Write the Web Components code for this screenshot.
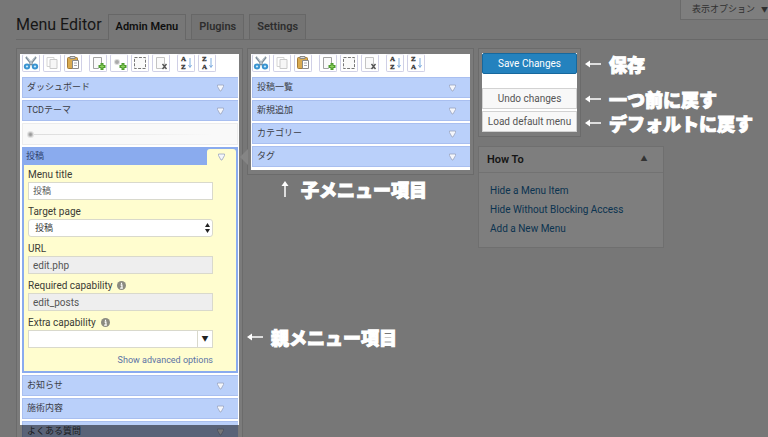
<!DOCTYPE html>
<html lang="ja">
<head>
<meta charset="utf-8">
<title>Menu Editor</title>
<style>
html,body{margin:0;height:100%;overflow:hidden}
body{background:#777;font-family:Roboto,"Noto Sans CJK JP",sans-serif;font-size:10px;line-height:15px;color:#333}
</style>
</head>
<body>
<menu-editor-page></menu-editor-page>
<script>
const define = (name, html) => customElements.define(name, class extends HTMLElement {
  constructor() {
    super();
    this.attachShadow({ mode: 'open' });
  }
  connectedCallback() {
    if (this.shadowRoot.childNodes.length) return;
    const t = document.createElement('template');
    t.innerHTML = '<style>*{box-sizing:border-box}a{text-decoration:none}button,input,select{font:inherit;color:inherit;margin:0;border-radius:0}</style>' + (typeof html === 'function' ? html(this) : html);
    this.shadowRoot.append(t.content.cloneNode(true));
  }
});

const page = `<path d="M3.500 2.500h8v8l-3 3h-5z" fill="#fafafa" stroke="#a3a3a3"/>`;
const plus = `<path d="M12 8v7M8.500 11.500h7" stroke="#4f9c30" stroke-width="3"/><path d="M12 9.500v4M10 11.500h4" stroke="#8ed05f"/>`;
const letters = (a, b) => `<g font-family="Liberation Serif, serif" font-weight="700" font-size="7" fill="#333" stroke="#333" stroke-width=".3"><text x="3" y="6">${a}</text><text x="3" y="14">${b}</text></g><path d="M12 3v9M10.500 10l1.500 2.500 1.500-2.500" fill="none" stroke="#7fade0"/>`;
const icons = {
  Cut: `<path d="M3 2l6.500 8M13 2L6.500 10" stroke="#7f8d99" stroke-width="2"/><path d="M4 2l5 7M12 2L7 9" stroke="#dce6ee" stroke-width=".7"/><g fill="#cdeafb" stroke="#3b94d1" stroke-width="2"><ellipse cx="4" cy="11.500" rx="2.200" ry="2"/><ellipse cx="12" cy="11.500" rx="2.200" ry="2"/></g>`,
  Copy: `<path d="M3 2.500h7v9H3z" fill="#fff" stroke="#d4d4d4"/><path d="M6 4.500h7v9H6z" fill="#f6f6f6" stroke="#cacaca"/>`,
  Paste: `<rect x="2.500" y="2.500" width="10" height="11" rx="1" fill="#d9aa50" stroke="#a37a38"/><path d="M5 1.500h5v2H5z" fill="#ddd" stroke="#888"/><path d="M7.500 5.500h6v8h-6z" fill="#fff" stroke="#8a8a8a"/><path d="M9 8h3M9 10.500h3" stroke="#aaa"/>`,
  'New menu': page + plus,
  'New separator': `<circle cx="6" cy="7" r="3" fill="#ddd"/><circle cx="6" cy="7" r="2" fill="#aaa"/>` + plus,
  Select: `<path d="M2.500 2.500h11v11h-11z" fill="#fafafa" stroke="#777" stroke-dasharray="3 1.400"/>`,
  Delete: `<path d="M3.500 2.500h8v11h-8z" fill="#fafafa" stroke="#c4c4c4"/><path d="M9.500 9l4 5M13.500 9l-4 5" stroke="#555" stroke-width="1.400"/>`,
  'Sort ascending': letters('A', 'Z'),
  'Sort descending': letters('Z', 'A')
};

define('icon-button', el => `<style>
:host{display:block}
button{display:block;width:18px;height:18px;padding:0;border:1px solid #d0d0e6;border-top-color:#f0f0f6;border-radius:2px;background:#fff}
svg{display:block;width:16px;height:16px}
</style><button aria-label="${el.getAttribute('name')}"><svg viewBox="0 0 16 16">${icons[el.getAttribute('name')]}</svg></button>`);

define('editor-toolbar', el => {
  const b = n => `<icon-button name="${n}"></icon-button>`;
  const mid = el.hasAttribute('separator') ? b('New separator') : '';
  return `<style>:host{display:flex;gap:7px;padding-bottom:5px}div{display:flex;gap:3px}</style>
<div>${b('Cut')}${b('Copy')}${b('Paste')}</div><div>${b('New menu')}${mid}${b('Select')}${b('Delete')}</div><div>${b('Sort ascending')}${b('Sort descending')}</div>`;
});

const tri = `<svg width="9" height="8" viewBox="0 0 9 8"><path d="M1.500 1h6v1.500L5 7H4L1.500 2.500z" fill="#f4f6fb" stroke="#9aa5bf" stroke-width=".8"/></svg>`;

define('menu-row', `<style>
:host{display:flex;align-items:center;height:21px;padding:0 12px 0 4px;border:1px solid #a9bff0;border-right:0;background:#bad0fa;color:#3a3d46;font-size:9px}
span{flex:1}
button{display:grid;place-items:center;border:0;background:none;padding:0;width:11px;height:15px}
</style><span><slot></slot></span><button aria-label="Expand">${tri}</button>`);

define('menu-separator', `<style>
:host{display:flex;align-items:center;height:22px;padding:0 4px;border:1px solid #ececec;background:#f9f9f9}
i{width:7px;height:7px;border-radius:50%;background:radial-gradient(#999 15%,#e2e2e2 60%)}
hr{flex:1;margin:0;border:0;height:1px;background:linear-gradient(90deg,#ddd,#f9f9f9 90%)}
</style><i></i><hr>`);

define('form-field', el => {
  const v = el.getAttribute('value') || '';
  const type = el.getAttribute('type');
  const ctl = type === 'select' ? `<select id="c"><option>${v}</option></select><svg width="5" height="10" viewBox="0 0 5 10"><path d="M0 4l2.500-4L5 4zM0 6l2.500 4L5 6z" fill="#222"/></svg>`
    : type === 'combo' ? `<input id="c" type="text" value="${v}"><button aria-label="Choose capability">▼</button>`
    : `<input id="c" type="text" value="${v}" ${el.hasAttribute('readonly') ? 'readonly' : ''}>`;
  const info = el.hasAttribute('info') ? `<svg width="9" height="9" viewBox="0 0 10 10"><circle cx="5" cy="5" r="5" fill="#8b8b80"/><path d="M5 2v1.500M4 4.500h1.500V8M3.500 8h3" stroke="#fff" stroke-width="1.300" fill="none"/></svg>` : '';
  return `<style>
:host{display:block;padding-bottom:4px}
.label{display:flex;align-items:center;gap:5px;height:15px;color:#3b3b35}
.box{display:flex;height:18px;position:relative}
input,select{flex:1;min-width:0;padding:0 4px;border:1px solid #d9d9cc;background:#fff;color:#555;appearance:none;font-size:9px}
input[readonly]{background:#eee;font-size:10px}
select{border-radius:3px;padding:0 6px;color:#333}
.box svg{position:absolute;right:3px;top:4px}
button{width:15px;border:1px solid #d9d9cc;border-left:0;background:#fff;padding:0;font-size:7px;line-height:1;color:#222}
</style><div class="label"><label for="c">${el.getAttribute('label')}</label>${info}</div><div class="box">${ctl}</div>`;
});

define('menu-item-open', `<style>
:host{display:block;border:2px solid #8aabee;background:#fffdcf}
header{display:flex;height:16px;background:#8aabee;color:#2c3e6b;padding-left:2px;font-size:9px;line-height:15px}
header span{flex:1}
button{width:29px;border:0;padding:0;background:#fffdcf;border-radius:3px 3px 0 0;display:grid;place-items:center}
section{padding:2px 23px 3px 4px}
a{display:block;text-align:right;color:#5b72a5;font-size:9px;padding-top:1px}
</style><header><span><slot name="title"></slot></span><button aria-label="Collapse">${tri}</button></header>
<section><slot></slot><a href="#">Show advanced options</a></section>`);

define('editor-column', el => `<style>
:host{display:block;position:relative;border:1px solid #6b6b6b;background:#7b7b7b;padding:5px 3px 4px}
.list{display:flex;flex-direction:column;gap:2px;background:#fff;padding:0 0 3px 1px}
:host([primary]) .list{padding:0 1px 0 2px}
.list editor-toolbar{margin-bottom:-2px}
.pointer{position:absolute;left:-8px;top:100px;width:8px;height:16px;background:#858585;clip-path:polygon(0 50%,100% 0,100% 100%)}
.fade{position:absolute;left:3px;right:3px;bottom:0;height:21px;background:rgba(0,0,0,.52)}
</style><div class="list"><editor-toolbar ${el.hasAttribute('primary') ? 'separator' : ''}></editor-toolbar><slot></slot></div>${el.hasAttribute('primary') ? '<div class="fade"></div>' : '<div class="pointer"></div>'}`);

define('callout-note', `<style>
:host{display:flex;align-items:center;gap:8px;color:#fff;font:900 18px/24px "Noto Sans CJK JP",sans-serif;white-space:nowrap}
b{font-weight:900;-webkit-text-stroke:1px #fff}
svg{flex:none}
:host([up]) svg{transform:rotate(90deg)}
</style><svg width="16" height="8" viewBox="0 0 16 8"><path d="M3 4h13" stroke="#fff" stroke-width="1.500"/><path d="M0 4l5-3.500v7z" fill="#fff"/></svg><b><slot></slot></b>`);

define('editor-actions', `<style>
:host{display:grid;grid-template-columns:103px 1fr;column-gap:4px}
.box{border:1px solid #6b6b6b;background:#7b7b7b;padding:4px 3px}
.inner{display:flex;flex-direction:column;background:#fff}
button{height:21px;padding:0;border:1px solid #d2d2d2;background:#f8f8f8;color:#555}
.save{background:#2482be;border-color:#17689d;border-radius:2px;color:#fff;margin-bottom:14px}
.undo{margin-bottom:2px}
.notes{display:flex;flex-direction:column;padding-top:4px}
.notes :first-child{margin-bottom:11px}
</style><div class="box"><div class="inner"><button class="save">Save Changes</button><button class="undo">Undo changes</button><button>Load default menu</button></div></div>
<div class="notes"><callout-note>保存</callout-note><callout-note>一つ前に戻す</callout-note><callout-note>デフォルトに戻す</callout-note></div>`);

define('how-to', `<style>
:host{display:block;width:64%;border:1px solid #6f6f6f;background:#7e7e7e}
header{display:flex;justify-content:space-between;align-items:center;height:26px;padding:0 15px 0 8px;border-bottom:1px solid #727272}
h2{margin:0;font-size:11px;font-weight:600;color:#151515}
button{border:0;background:none;padding:0;font-size:7px;color:#333}
ul{list-style:none;margin:0;padding:8px 11px 9px}
li{line-height:19px}
a{color:#0b3350}
</style><header><h2>How To</h2><button aria-label="Toggle panel">▲</button></header>
<ul><li><a href="#">Hide a Menu Item</a></li><li><a href="#">Hide Without Blocking Access</a></li><li><a href="#">Add a New Menu</a></li></ul>`);

define('editor-header', `<style>
:host{display:flex;align-items:flex-end;height:40px;border-bottom:1px solid #686868}
h1{margin:0 6px 0 0;font-size:16px;line-height:29px;font-weight:400;color:#161616}
nav{display:flex;gap:5px;flex:1}
nav a{height:25px;padding:0 7px;border:1px solid #676767;border-bottom:0;font-size:11px;line-height:24px;font-weight:600;color:#2d2d2d;background:#737373}
nav a[aria-current]{height:26px;margin-bottom:-1px;background:#777;color:#0e0e0e}
button{align-self:flex-start;height:20px;border:1px solid #6a6a6a;border-width:0 0 1px 1px;background:#7e7e7e;color:#303030;font-size:9px;padding:0 0 0 11px;white-space:nowrap}
small{font-size:7px;margin-left:6px}
</style><h1>Menu Editor</h1><nav><a href="#" aria-current="page">Admin Menu</a><a href="#">Plugins</a><a href="#">Settings</a></nav><button>表示オプション<small>▼</small></button>`);

define('menu-editor-page', `<style>
:host{display:block;padding-left:16px}
main{display:grid;grid-template-columns:227fr 227fr 290fr;gap:4px;padding-top:8px;align-items:start}
.child callout-note{padding:2px 0 0 30px}
.child callout-note:last-child{padding:124px 0 0}
how-to{margin-top:9px}
</style><editor-header></editor-header><main>
<editor-column primary><menu-row>ダッシュボード</menu-row><menu-row>TCDテーマ</menu-row><menu-separator></menu-separator>
<menu-item-open><span slot="title">投稿</span>
<form-field label="Menu title" value="投稿"></form-field>
<form-field label="Target page" value="投稿" type="select"></form-field>
<form-field label="URL" value="edit.php" readonly></form-field>
<form-field label="Required capability" value="edit_posts" readonly info></form-field>
<form-field label="Extra capability" type="combo" info></form-field>
</menu-item-open>
<menu-row>お知らせ</menu-row><menu-row>施術内容</menu-row><menu-row>よくある質問</menu-row></editor-column>
<div class="child"><editor-column><menu-row>投稿一覧</menu-row><menu-row>新規追加</menu-row><menu-row>カテゴリー</menu-row><menu-row>タグ</menu-row></editor-column>
<callout-note up>子メニュー項目</callout-note><callout-note>親メニュー項目</callout-note></div>
<div><editor-actions></editor-actions><how-to></how-to></div>
</main>`);
</script>
</body>
</html>
